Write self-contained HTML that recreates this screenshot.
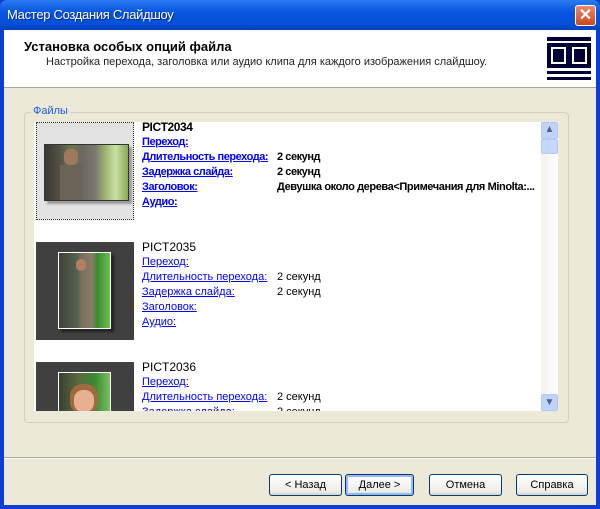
<!DOCTYPE html>
<html><head><meta charset="utf-8"><style>
*{margin:0;padding:0;box-sizing:border-box}
body{width:600px;height:509px;overflow:hidden;background:#0a3fd0;font-family:"Liberation Sans",sans-serif;font-size:11px;position:relative}
.abs{position:absolute}
#title{left:0;top:0;width:600px;height:30px;background:linear-gradient(#2a7cf0,#0755e0 40%,#0450d8 80%,#0340b8);border-radius:7px 7px 0 0}
#title span{position:absolute;left:7px;top:7px;color:#fff;font-size:13px;letter-spacing:-0.3px;text-shadow:1px 1px #0a2a80}
#close{left:575px;top:5px;width:21px;height:21px;background:linear-gradient(#e88a6a,#d0461f);border:1px solid #fff;border-radius:3px;color:#fff;font-size:16px;font-weight:bold;text-align:center;line-height:19px}
#client{left:4px;top:30px;width:592px;height:475px;background:#ece9d8}
#hdr{left:4px;top:30px;width:592px;height:58px;background:#fff;border-bottom:1px solid #aca899}
.l{color:#0000ff;text-decoration:underline}
#grp{left:24px;top:112px;width:545px;height:311px;border:1px solid #d0d0bf;border-radius:4px}
#list{left:34px;top:122px;width:524px;height:289px;background:#fff;overflow:hidden}
.row{position:absolute;left:108px;font-size:11px;line-height:15px;white-space:nowrap}
.b{font-weight:bold;letter-spacing:-0.45px}
.btn{position:absolute;top:474px;height:22px;border:1px solid #003c74;border-radius:3px;background:linear-gradient(#fff,#ecebe6 85%,#d6d0c5);text-align:center;line-height:20px;font-size:11px}
</style></head><body>
<div class="abs" id="title"><span>Мастер Создания Слайдшоу</span></div>
<div class="abs" id="close">✕</div>
<div class="abs" id="client"></div>
<div class="abs" id="hdr"></div>
<div class="abs" style="left:24px;top:39px;font-size:13px;font-weight:bold">Установка особых опций файла</div>
<div class="abs" style="left:46px;top:56px;font-size:11px;color:#222">Настройка перехода, заголовка или аудио клипа для каждого изображения слайдшоу.</div>
<svg class="abs" style="left:547px;top:37px" width="44" height="44"><rect x="0" y="0" width="44" height="4" fill="#000033"/><rect x="0" y="6" width="44" height="25" fill="#000033"/><rect x="4" y="10" width="15" height="17" fill="#fff"/><rect x="25" y="10" width="15" height="17" fill="#fff"/><rect x="6" y="12" width="11" height="13" fill="#000033"/><rect x="27" y="12" width="11" height="13" fill="#000033"/><rect x="0" y="34" width="44" height="3" fill="#000033"/><rect x="0" y="40" width="44" height="3" fill="#000033"/></svg>
<div class="abs" id="grp"></div>
<div class="abs" style="left:31px;top:105px;background:#ece9d8;padding:0 2px;color:#1a5ad8;font-size:11px">Файлы</div>
<div class="abs" id="list">
 <div class="abs" style="left:2px;top:0;width:98px;height:98px;background:#e3e3e3;border:1px dotted #333"></div>
 <div class="abs" style="left:10px;top:22px;width:85px;height:57px;background:#333;box-shadow:3px 3px 2px #999"></div>
 <div class="abs" style="left:11px;top:23px;width:83px;height:55px;background:linear-gradient(90deg,#3a3a32 0,#555048 18%,#6a7a40 30%,#6a6860 45%,#7b7670 60%,#9fb070 72%,#c8e0a0 85%,#8aa858 100%)"></div>
 <div class="abs" style="left:30px;top:27px;width:14px;height:16px;background:#a07a60;border-radius:6px"></div>
 <div class="abs" style="left:26px;top:43px;width:22px;height:35px;background:#6a6458"></div>
 <div class="abs b" style="left:108px;top:-2px;font-size:12px">PICT2034</div>
 <div class="row b" style="top:13px"><span class="l">Переход:</span></div>
 <div class="row b" style="top:28px"><span class="l">Длительность перехода:</span></div>
 <div class="row b" style="top:43px"><span class="l">Задержка слайда:</span></div>
 <div class="row b" style="top:58px"><span class="l">Заголовок:</span></div>
 <div class="row b" style="top:73px"><span class="l">Аудио:</span></div>
 <div class="row b" style="left:243px;top:28px">2 секунд</div>
 <div class="row b" style="left:243px;top:43px">2 секунд</div>
 <div class="row b" style="left:243px;top:58px;letter-spacing:-0.4px">Девушка около дерева&lt;Примечания для Minolta:...</div>
 <div class="abs" style="left:2px;top:120px;width:98px;height:98px;background:#404040"></div>
 <div class="abs" style="left:24px;top:130px;width:53px;height:77px;background:#fff;box-shadow:3px 3px 2px #222"></div>
 <div class="abs" style="left:25px;top:131px;width:51px;height:75px;background:linear-gradient(90deg,#3e4238 0,#556050 35%,#7a7060 45%,#8a7c68 65%,#3a8a30 75%,#6ac050 100%)"></div>
 <div class="abs" style="left:42px;top:137px;width:10px;height:12px;background:#b08060;border-radius:5px"></div>
 <div class="abs" style="left:108px;top:118px;font-size:12px">PICT2035</div>
 <div class="row" style="top:133px"><span class="l">Переход:</span></div>
 <div class="row" style="top:148px"><span class="l">Длительность перехода:</span></div>
 <div class="row" style="top:163px"><span class="l">Задержка слайда:</span></div>
 <div class="row" style="top:178px"><span class="l">Заголовок:</span></div>
 <div class="row" style="top:193px"><span class="l">Аудио:</span></div>
 <div class="row" style="left:243px;top:148px">2 секунд</div>
 <div class="row" style="left:243px;top:163px">2 секунд</div>
 <div class="abs" style="left:2px;top:240px;width:98px;height:98px;background:#404040"></div>
 <div class="abs" style="left:24px;top:250px;width:53px;height:77px;background:#fff"></div>
 <div class="abs" style="left:25px;top:251px;width:51px;height:75px;background:linear-gradient(90deg,#3a4030 0,#5a6a40 40%,#3a8a30 70%,#7ac060 100%)"></div>
 <div class="abs" style="left:36px;top:262px;width:28px;height:30px;background:#a06a40;border-radius:12px"></div>
 <div class="abs" style="left:40px;top:268px;width:20px;height:22px;background:#e8b090;border-radius:9px"></div>
 <div class="abs" style="left:108px;top:238px;font-size:12px">PICT2036</div>
 <div class="row" style="top:253px"><span class="l">Переход:</span></div>
 <div class="row" style="top:268px"><span class="l">Длительность перехода:</span></div>
 <div class="row" style="top:283px"><span class="l">Задержка слайда:</span></div>
 <div class="row" style="left:243px;top:268px">2 секунд</div>
 <div class="row" style="left:243px;top:283px">2 секунд</div>
 <div class="abs" style="left:507px;top:0;width:17px;height:289px;background:linear-gradient(90deg,#f3f1ec,#fefefb)"></div>
 <div class="abs" style="left:507px;top:0;width:17px;height:17px;background:#c1d3fb;border:1px solid #b4c8f6;border-radius:2px;color:#4d6185;font-size:10px;text-align:center;line-height:14px">▲</div>
 <div class="abs" style="left:507px;top:17px;width:17px;height:15px;background:#c6d6fc;border:1px solid #b4c8f6;border-radius:2px"></div>
 <div class="abs" style="left:507px;top:272px;width:17px;height:17px;background:#c1d3fb;border:1px solid #b4c8f6;border-radius:2px;color:#4d6185;font-size:10px;text-align:center;line-height:15px">▼</div>
</div>
<div class="abs" style="left:4px;top:457px;width:592px;height:1px;background:#aca899"></div>
<div class="abs" style="left:4px;top:458px;width:592px;height:1px;background:#fff"></div>
<div class="btn" style="left:269px;width:73px">&lt; Назад</div>
<div class="btn" style="left:345px;width:69px;box-shadow:inset 0 0 0 2px #98b8f0">Далее &gt;</div>
<div class="btn" style="left:429px;width:73px">Отмена</div>
<div class="btn" style="left:516px;width:72px">Справка</div>
</body></html>
